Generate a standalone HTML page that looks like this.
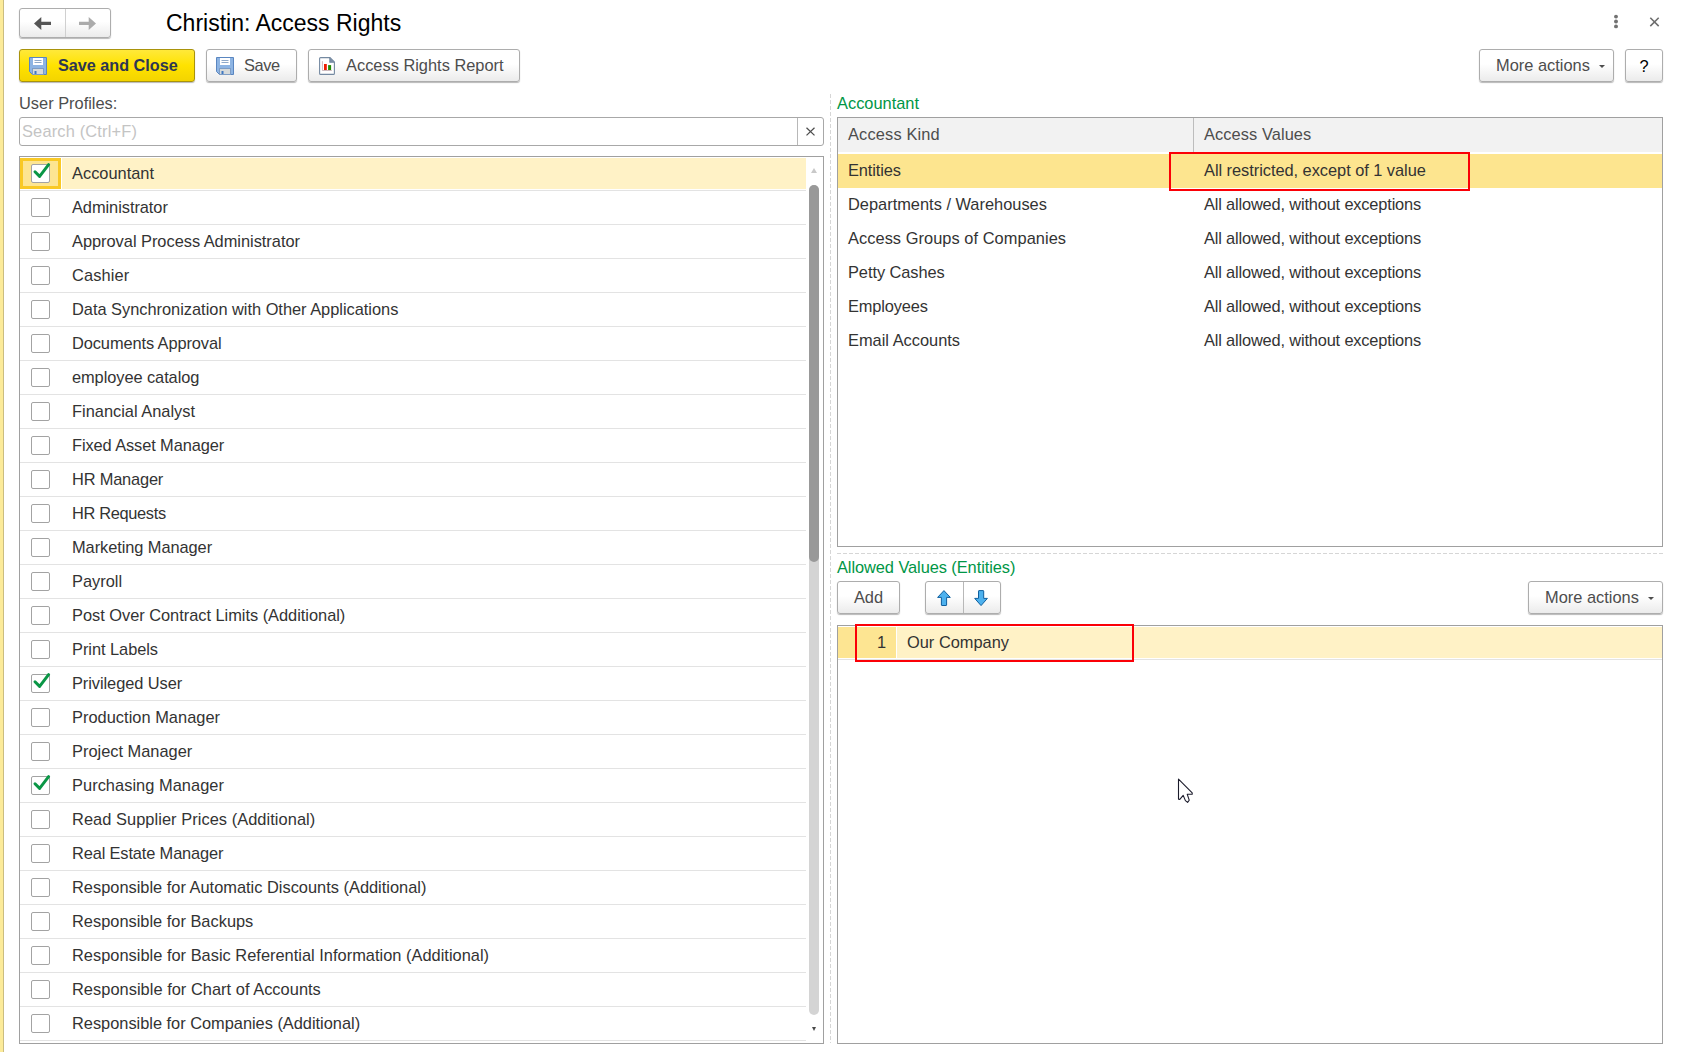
<!DOCTYPE html><html><head><meta charset="utf-8"><title>Christin: Access Rights</title><style>*{box-sizing:border-box;margin:0;padding:0}
html,body{width:1687px;height:1052px;overflow:hidden;background:#fff}
body{position:relative;font-family:"Liberation Sans",sans-serif;font-size:16.4px;color:#333}
#strip{position:absolute;left:0;top:0;width:4px;height:1052px;background:linear-gradient(90deg,#fceb9a 0,#fceb9a 3px,#cbbd80 3px,#cbbd80 4px)}
.btn{position:absolute;border:1px solid #adadad;border-radius:3px;background:linear-gradient(#fff 0,#fff 45%,#ebebeb 100%);box-shadow:0 1px 1px rgba(0,0,0,.28)}
.ybtn{border-color:#a9930b;background:linear-gradient(#ffe93a 0,#ffe200 50%,#f3d400 100%)}
.bt{position:absolute;top:0;height:100%;line-height:31px;white-space:nowrap;color:#4d4d4d}
.ico{position:absolute;left:9px;top:7px}
.tri{position:absolute;top:15px;width:0;height:0;border-left:3.5px solid transparent;border-right:3.5px solid transparent;border-top:3.5px solid #4d4d4d}
#nav{left:19px;top:8px;width:92px;height:30px}
#navdiv{position:absolute;left:45px;top:0;width:1px;height:28px;background:#d0d0d0}
#title{position:absolute;left:166px;top:9px;font-size:23px;line-height:28px;color:#000;white-space:nowrap}
#dots{position:absolute;left:1613px;top:13px}
#xclose{position:absolute;left:1649px;top:17px}
#bsc{left:19px;top:49px;width:176px;height:33px}
#bsave{left:206px;top:49px;width:91px;height:33px}
#brep{left:308px;top:49px;width:212px;height:33px}
#bmore1{left:1479px;top:49px;width:135px;height:33px}
#bhelp{left:1625px;top:49px;width:38px;height:33px}
.lbl{position:absolute;line-height:20px;white-space:nowrap;color:#4d4d4d}
.grn{color:#009646}
#search{position:absolute;left:19px;top:117px;width:805px;height:29px;border:1px solid #a8a8a8;border-radius:3px;background:#fff}
#ph{position:absolute;left:2px;top:0;line-height:27px;color:#c4c4c4;letter-spacing:.17px}
#clr{position:absolute;right:0;top:0;width:26px;height:27px;border-left:1px solid #b8b8b8}
#list{position:absolute;left:19px;top:156px;width:805px;height:888px;border:1px solid #a0a0a0;overflow:hidden;background:#fff}
.row{position:absolute;left:0;width:786px;height:34px;border-bottom:1px solid #e3e3e3}
.rowhl{position:absolute;left:42px;top:1px;width:744px;height:31px;background:#fff2c6}
.cellsel{position:absolute;left:0;top:1px;width:41px;height:31px;background:#fde592;border:3px solid #f9c926}
.cb{position:absolute;left:11px;top:7px;width:19px;height:19px;border:1px solid #a3a3a3;border-radius:2px;background:#fff}
.tick{position:absolute;left:10px;top:4px}
.rt{position:absolute;left:52px;top:0;line-height:33px;white-space:nowrap;color:#333}
#sbtrack{position:absolute;left:789px;top:28px;width:10px;height:830px;border-radius:5px;background:#d4d4d4}
#sbthumb{position:absolute;left:789px;top:28px;width:10px;height:377px;border-radius:5px;background:#999}
#sbup,#sbdn{position:absolute;left:791px;width:0;height:0;border-left:3px solid transparent;border-right:3px solid transparent}
#sbup{top:11px;border-bottom:5px solid #c9c9c9}
#sbdn{top:870px;left:791.5px;border-left-width:2.75px;border-right-width:2.75px;border-top:4.5px solid #4a4a4a}
#vdash{position:absolute;left:830px;top:94px;width:1px;height:949px;background:repeating-linear-gradient(180deg,#d6d6d6 0,#d6d6d6 4px,transparent 4px,transparent 6px)}
#hdash{position:absolute;left:837px;top:553px;width:826px;height:1px;background:repeating-linear-gradient(90deg,#d6d6d6 0,#d6d6d6 4px,transparent 4px,transparent 6px)}
#tbl1{position:absolute;left:837px;top:117px;width:826px;height:430px;border:1px solid #a0a0a0;background:#fff;overflow:hidden}
#hdr{position:absolute;left:0;top:0;width:100%;height:34px;background:#f2f2f2}
#hdiv{position:absolute;left:355px;top:0;width:1px;height:35px;background:#bdbdbd}
.ht{position:absolute;top:0;line-height:33px;color:#4d4d4d;white-space:nowrap}
.trow{position:absolute;left:0;width:100%;height:34px}
.tsel{background:#fde58f}
.tt{position:absolute;top:0;line-height:33px;white-space:nowrap;color:#333}
#red1{position:absolute;left:1169px;top:152px;width:301px;height:39px;border:2px solid #fb0007}
#badd{left:837px;top:581px;width:63px;height:33px}
#bud{left:925px;top:581px;width:76px;height:33px}
#uddiv{position:absolute;left:37px;top:0;width:1px;height:31px;background:#b8b8b8}
#bmore2{left:1528px;top:581px;width:135px;height:33px}
#tbl2{position:absolute;left:837px;top:625px;width:826px;height:419px;border:1px solid #a0a0a0;background:#fff;overflow:hidden}
#r2{position:absolute;left:0;top:0;width:100%;height:34px;border-bottom:1px solid #e3e3e3}
#r2hl{position:absolute;left:59px;top:1px;width:765px;height:31px;background:#fff2c6}
#r2n{position:absolute;left:0;top:1px;width:58px;height:31px;background:#fde592;line-height:31px;text-align:right;padding-right:10px;color:#333}
#red2{position:absolute;left:855px;top:624px;width:279px;height:38px;border:2px solid #fb0007}
#cursor{position:absolute;left:1177px;top:778px}
</style></head><body>
<div id="strip"></div>
<div class="btn" id="nav"><div id="navdiv"></div><svg style="position:absolute;left:0;top:0" width="90" height="28" viewBox="0 0 90 28"><path d="M14 14.4L21.3 7.9V12.7H31V16.1H21.3V20.9Z" fill="#555"/><path d="M76 14.4L68.7 7.9V12.7H59V16.1H68.7V20.9Z" fill="#ababab"/></svg></div>
<div id="title">Christin: Access Rights</div>
<svg id="dots" width="6" height="18" viewBox="0 0 6 18"><circle cx="3" cy="3.6" r="1.95" fill="#727272"/><circle cx="3" cy="8.5" r="1.95" fill="#727272"/><circle cx="3" cy="13.4" r="1.95" fill="#727272"/></svg>
<svg id="xclose" width="11" height="11" viewBox="0 0 11 11"><path d="M1.3 0.7L9.7 9.1M9.7 0.7L1.3 9.1" stroke="#6e6e6e" stroke-width="1.55" fill="none"/></svg>
<div class="btn ybtn" id="bsc"><svg class="ico" width="18" height="18" viewBox="0 0 18 18"><path d="M0.5 0.5H17.5V17.5H3.5L0.5 14.5Z" fill="#8db4e3" stroke="#5a86c0"/><rect x="4" y="1" width="10" height="7" fill="#fff"/><rect x="5.5" y="3" width="7" height="1" fill="#8fa9c9"/><rect x="5.5" y="5" width="7" height="1" fill="#8fa9c9"/><rect x="4" y="12" width="10" height="5" fill="#d6dadb"/><rect x="3.5" y="11.5" width="11" height="6" fill="none" stroke="#7d9cc4"/><rect x="5.5" y="14" width="2" height="3" fill="#3f78c2"/></svg><span class="bt" style="left:38px;font-weight:bold;color:#2d3653;font-size:16.2px">Save and Close</span></div>
<div class="btn" id="bsave"><svg class="ico" width="18" height="18" viewBox="0 0 18 18"><path d="M0.5 0.5H17.5V17.5H3.5L0.5 14.5Z" fill="#8db4e3" stroke="#5a86c0"/><rect x="4" y="1" width="10" height="7" fill="#fff"/><rect x="5.5" y="3" width="7" height="1" fill="#8fa9c9"/><rect x="5.5" y="5" width="7" height="1" fill="#8fa9c9"/><rect x="4" y="12" width="10" height="5" fill="#d6dadb"/><rect x="3.5" y="11.5" width="11" height="6" fill="none" stroke="#7d9cc4"/><rect x="5.5" y="14" width="2" height="3" fill="#3f78c2"/></svg><span class="bt" style="left:37px;letter-spacing:-.45px">Save</span></div>
<div class="btn" id="brep"><svg class="ico" style="left:10px" width="16" height="18" viewBox="0 0 16 18"><path d="M1.6 0.6H11L15.4 5V16.4Q15.4 17.4 14.4 17.4H1.6Q0.6 17.4 0.6 16.4V1.6Q0.6 0.6 1.6 0.6Z" fill="#fff" stroke="#7489a1" stroke-width="1.1"/><path d="M10.6 0.8V5.4H15.2Z" fill="#7b8fa8" stroke="#7489a1" stroke-width="0.7"/><path d="M3.4 4.2V13.5H12.8" fill="none" stroke="#b99a9f" stroke-width="0.7"/><rect x="5" y="7" width="2.8" height="6" fill="#ee1c00"/><rect x="9.1" y="8.1" width="3" height="4.9" fill="#238c05"/></svg><span class="bt" style="left:37px">Access Rights Report</span></div>
<div class="btn" id="bmore1"><span class="bt" style="left:16px">More actions</span><i class="tri" style="left:119px"></i></div>
<div class="btn" id="bhelp"><span class="bt" style="left:0;top:1px;width:100%;text-align:center;color:#000">?</span></div>
<div class="lbl" style="left:19px;top:93px">User Profiles:</div>
<div id="search"><span id="ph">Search (Ctrl+F)</span><div id="clr"><svg width="11" height="11" viewBox="0 0 11 11" style="position:absolute;left:7px;top:8px"><path d="M1.5 1.8L9.5 9.4M9.5 1.8L1.5 9.4" stroke="#4d4d4d" stroke-width="1.25" fill="none"/></svg></div></div>
<div id="list">
<div class="row sel" style="top:0px"><div class="rowhl"></div><div class="cellsel"></div><div class="cb"></div><svg class="tick" width="22" height="20" viewBox="0 0 22 20"><path d="M5 10.8L9.6 15.4L18.6 3.6" fill="none" stroke="#0a9645" stroke-width="3" stroke-linejoin="round" stroke-linecap="round"/></svg><span class="rt" style="">Accountant</span></div>
<div class="row" style="top:34px"><div class="cb"></div><span class="rt" style="letter-spacing:-0.058px">Administrator</span></div>
<div class="row" style="top:68px"><div class="cb"></div><span class="rt" style="letter-spacing:-0.024px">Approval Process Administrator</span></div>
<div class="row" style="top:102px"><div class="cb"></div><span class="rt" style="letter-spacing:0.117px">Cashier</span></div>
<div class="row" style="top:136px"><div class="cb"></div><span class="rt" style="letter-spacing:-0.016px">Data Synchronization with Other Applications</span></div>
<div class="row" style="top:170px"><div class="cb"></div><span class="rt" style="letter-spacing:-0.094px">Documents Approval</span></div>
<div class="row" style="top:204px"><div class="cb"></div><span class="rt" style="letter-spacing:-0.073px">employee catalog</span></div>
<div class="row" style="top:238px"><div class="cb"></div><span class="rt" style="">Financial Analyst</span></div>
<div class="row" style="top:272px"><div class="cb"></div><span class="rt" style="letter-spacing:-0.100px">Fixed Asset Manager</span></div>
<div class="row" style="top:306px"><div class="cb"></div><span class="rt" style="letter-spacing:-0.178px">HR Manager</span></div>
<div class="row" style="top:340px"><div class="cb"></div><span class="rt" style="letter-spacing:-0.340px">HR Requests</span></div>
<div class="row" style="top:374px"><div class="cb"></div><span class="rt" style="letter-spacing:-0.069px">Marketing Manager</span></div>
<div class="row" style="top:408px"><div class="cb"></div><span class="rt" style="">Payroll</span></div>
<div class="row" style="top:442px"><div class="cb"></div><span class="rt" style="letter-spacing:-0.024px">Post Over Contract Limits (Additional)</span></div>
<div class="row" style="top:476px"><div class="cb"></div><span class="rt" style="letter-spacing:-0.045px">Print Labels</span></div>
<div class="row" style="top:510px"><div class="cb"></div><svg class="tick" width="22" height="20" viewBox="0 0 22 20"><path d="M5 10.8L9.6 15.4L18.6 3.6" fill="none" stroke="#0a9645" stroke-width="3" stroke-linejoin="round" stroke-linecap="round"/></svg><span class="rt" style="letter-spacing:-0.071px">Privileged User</span></div>
<div class="row" style="top:544px"><div class="cb"></div><span class="rt" style="letter-spacing:0.024px">Production Manager</span></div>
<div class="row" style="top:578px"><div class="cb"></div><span class="rt" style="">Project Manager</span></div>
<div class="row" style="top:612px"><div class="cb"></div><svg class="tick" width="22" height="20" viewBox="0 0 22 20"><path d="M5 10.8L9.6 15.4L18.6 3.6" fill="none" stroke="#0a9645" stroke-width="3" stroke-linejoin="round" stroke-linecap="round"/></svg><span class="rt" style="letter-spacing:0.041px">Purchasing Manager</span></div>
<div class="row" style="top:646px"><div class="cb"></div><span class="rt" style="letter-spacing:0.056px">Read Supplier Prices (Additional)</span></div>
<div class="row" style="top:680px"><div class="cb"></div><span class="rt" style="letter-spacing:-0.139px">Real Estate Manager</span></div>
<div class="row" style="top:714px"><div class="cb"></div><span class="rt" style="">Responsible for Automatic Discounts (Additional)</span></div>
<div class="row" style="top:748px"><div class="cb"></div><span class="rt" style="">Responsible for Backups</span></div>
<div class="row" style="top:782px"><div class="cb"></div><span class="rt" style="letter-spacing:0.012px">Responsible for Basic Referential Information (Additional)</span></div>
<div class="row" style="top:816px"><div class="cb"></div><span class="rt" style="letter-spacing:0.031px">Responsible for Chart of Accounts</span></div>
<div class="row" style="top:850px"><div class="cb"></div><span class="rt" style="letter-spacing:-0.019px">Responsible for Companies (Additional)</span></div>
<div id="sbtrack"></div><div id="sbthumb"></div><i id="sbup"></i><i id="sbdn"></i>
</div>
<div id="vdash"></div>
<div class="lbl grn" style="left:837px;top:93px">Accountant</div>
<div id="tbl1"><div id="hdr"><span class="ht" style="left:10px;letter-spacing:.15px">Access Kind</span><div id="hdiv"></div><span class="ht" style="left:366px;letter-spacing:.08px">Access Values</span></div>
<div class="trow tsel" style="top:36px"><span class="tt" style="left:10px;letter-spacing:-0.107px">Entities</span><span class="tt" style="left:366px;letter-spacing:-0.041px">All restricted, except of 1 value</span></div>
<div class="trow" style="top:70px"><span class="tt" style="left:10px">Departments / Warehouses</span><span class="tt" style="left:366px;letter-spacing:-0.170px">All allowed, without exceptions</span></div>
<div class="trow" style="top:104px"><span class="tt" style="left:10px;letter-spacing:0.048px">Access Groups of Companies</span><span class="tt" style="left:366px;letter-spacing:-0.170px">All allowed, without exceptions</span></div>
<div class="trow" style="top:138px"><span class="tt" style="left:10px;letter-spacing:-0.068px">Petty Cashes</span><span class="tt" style="left:366px;letter-spacing:-0.170px">All allowed, without exceptions</span></div>
<div class="trow" style="top:172px"><span class="tt" style="left:10px;letter-spacing:-0.150px">Employees</span><span class="tt" style="left:366px;letter-spacing:-0.170px">All allowed, without exceptions</span></div>
<div class="trow" style="top:206px"><span class="tt" style="left:10px">Email Accounts</span><span class="tt" style="left:366px;letter-spacing:-0.170px">All allowed, without exceptions</span></div>
</div>
<div id="red1"></div>
<div id="hdash"></div>
<div class="lbl grn" style="left:837px;top:557px;letter-spacing:-.07px">Allowed Values (Entities)</div>
<div class="btn" id="badd"><span class="bt" style="left:0;width:100%;text-align:center">Add</span></div>
<div class="btn" id="bud"><div id="uddiv"></div><svg style="position:absolute;left:0;top:0" width="74" height="31" viewBox="0 0 74 31"><path d="M17.95 8.6L24.3 15.4H20.6V23Q20.6 23.5 20.1 23.5H15.9Q15.4 23.5 15.4 23V15.4H11.6Z" fill="#4db1ee" stroke="#0f5f9e" stroke-width="1" stroke-linejoin="round"/><path d="M55.05 23.6L61.4 16.4H57.7V9.1Q57.7 8.6 57.2 8.6H53Q52.5 8.6 52.5 9.1V16.4H48.7Z" fill="#4db1ee" stroke="#0f5f9e" stroke-width="1" stroke-linejoin="round"/></svg></div>
<div class="btn" id="bmore2"><span class="bt" style="left:16px">More actions</span><i class="tri" style="left:119px"></i></div>
<div id="tbl2"><div id="r2"><div id="r2hl"></div><div id="r2n">1</div><span class="tt" style="left:69px;top:0">Our Company</span></div></div>
<div id="red2"></div>
<svg id="cursor" width="18" height="27" viewBox="0 0 18 27"><path d="M1.5 1.2V21.2L2.8 21.4L6.2 17.4L8.4 22.6L10.6 24.4L12.2 22.2L10.2 16.2H15.2V14.8Z" fill="#fff" stroke="#1b1b2b" stroke-width="1.1" stroke-linejoin="round"/></svg>
</body></html>
